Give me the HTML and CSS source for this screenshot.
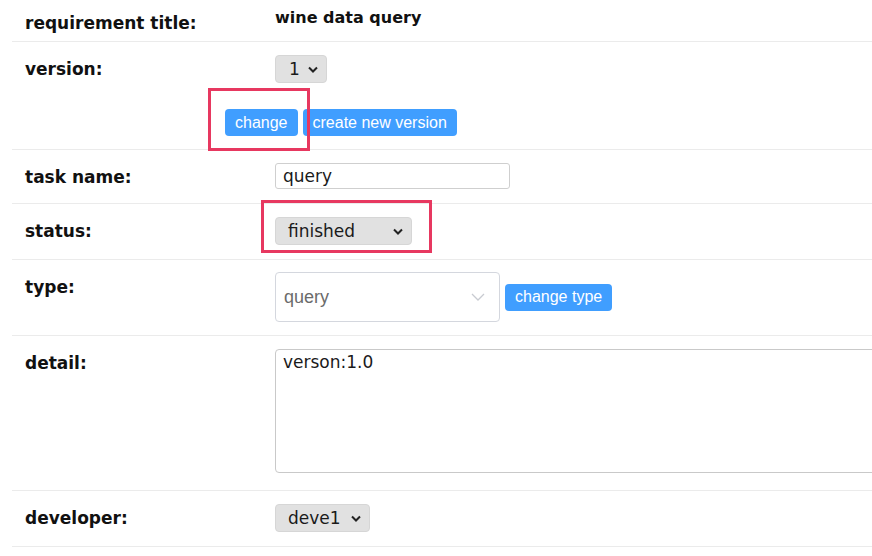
FILE: index.html
```html
<!DOCTYPE html>
<html>
<head>
<meta charset="utf-8">
<link rel="stylesheet" href="styles.css">
</head>
<body>
<div class="sheet">
  <div class="row row-title">
    <div class="label">requirement title:</div>
    <div class="value title-value">wine data query</div>
  </div>
  <div class="row row-version">
    <div class="label">version:</div>
    <div class="value">
      <div class="select sel-version"><span>1</span><svg class="chev" viewBox="0 0 10 6"><path d="M1 1l4 4 4-4"/></svg></div>
    </div>
    <div class="actions">
      <button class="btn">change</button>
      <button class="btn">create new version</button>
      <div class="mark mark-change"></div>
    </div>
  </div>
  <div class="row">
    <div class="label">task name:</div>
    <div class="value"><input class="text-input" value="query"></div>
  </div>
  <div class="row">
    <div class="label">status:</div>
    <div class="value">
      <div class="select sel-status"><span>finished</span><svg class="chev" viewBox="0 0 10 6"><path d="M1 1l4 4 4-4"/></svg></div>
      <div class="mark mark-status"></div>
    </div>
  </div>
  <div class="row row-type">
    <div class="label">type:</div>
    <div class="value type-value">
      <div class="el-select"><span>query</span><svg class="el-chev" viewBox="0 0 14 8"><path d="M1 1l6 6 6-6"/></svg></div>
      <button class="btn">change type</button>
    </div>
  </div>
  <div class="row row-detail">
    <div class="label">detail:</div>
    <div class="value"><textarea class="detail-area">verson:1.0</textarea></div>
  </div>
  <div class="row">
    <div class="label">developer:</div>
    <div class="value">
      <div class="select sel-dev"><span>deve1</span><svg class="chev" viewBox="0 0 10 6"><path d="M1 1l4 4 4-4"/></svg></div>
    </div>
  </div>
</div>
</body>
</html>
```
FILE: styles.css
```css
html, body {
  margin: 0;
  padding: 0;
  background: #fff;
}
body {
  font-family: "DejaVu Sans", sans-serif;
  color: #111;
  overflow: hidden;
}
.sheet {
  margin-left: 12px;
  width: 1000px;
}
.row {
  display: flex;
  flex-wrap: wrap;
  border-bottom: 1px solid #ebebeb;
  padding: 13px 0 14px;
  position: relative;
}
.label {
  width: 250px;
  padding-left: 13px;
  padding-top: 4px;
  font-weight: bold;
  font-size: 17px;
  line-height: 20px;
}
.value {
  position: relative;
  display: flex;
  align-items: flex-start;
}
.row-title {
  height: 42px;
  box-sizing: border-box;
  padding: 0;
}
.row-title .label {
  padding-top: 13px;
}
.title-value {
  font-weight: bold;
  font-size: 16px;
  padding-top: 8px;
  line-height: 20px;
}
.row-version {
  padding-bottom: 13px;
}
.select {
  display: flex;
  align-items: center;
  height: 28px;
  box-sizing: border-box;
  background: #e1e1e1;
  border: 1px solid #d6d6d6;
  border-radius: 4px;
  padding: 0 8px 0 12px;
  font-size: 17px;
  color: #1a1a1a;
}
.select span {
  flex: 1;
}
.chev {
  width: 10px;
  height: 7px;
  fill: none;
  stroke: #222;
  stroke-width: 2;
}
.sel-version { width: 52px; padding-left: 13px; }
.sel-status { width: 137px; }
.sel-dev { width: 95px; }
.actions {
  flex-basis: 100%;
  display: flex;
  gap: 5px;
  padding-left: 213px;
  margin-top: 26px;
  position: relative;
}
.btn {
  font-family: "Liberation Sans", Arial, sans-serif;
  font-size: 16px;
  color: #fff;
  background: #409eff;
  border: none;
  border-radius: 4px;
  height: 27px;
  padding: 0 10px;
  margin: 0;
}
.text-input {
  width: 235px;
  height: 26px;
  box-sizing: border-box;
  border: 1px solid #cfcfcf;
  border-radius: 3px;
  padding: 0 7px;
  font-family: "DejaVu Sans", sans-serif;
  font-size: 17px;
  color: #1a1a1a;
  margin: 0;
}
.row-type {
  padding: 12px 0 13px;
}
.type-value {
  align-items: center;
  gap: 5px;
}
.el-select {
  width: 225px;
  height: 50px;
  box-sizing: border-box;
  border: 1px solid #d4d7de;
  border-radius: 4px;
  display: flex;
  align-items: center;
  padding: 0 14px 0 8px;
  font-family: "Liberation Sans", Arial, sans-serif;
  font-size: 18px;
  color: #6b6b6b;
}
.el-select span { flex: 1; }
.el-chev {
  width: 14px;
  height: 8px;
  fill: none;
  stroke: #c8cbd1;
  stroke-width: 1.3;
}
.row-type .label { padding-top: 5px; }
.row-detail {
  padding-bottom: 17px;
}
.detail-area {
  display: block;
  width: 620px;
  height: 124px;
  box-sizing: border-box;
  border: 1px solid #c9c9c9;
  border-radius: 4px;
  padding: 2px 7px;
  font-family: "DejaVu Sans", sans-serif;
  font-size: 17px;
  color: #1a1a1a;
  resize: none;
  margin: 0;
}
.mark {
  position: absolute;
  border: 3px solid #e73860;
  box-sizing: border-box;
}
.mark-change {
  left: 196px;
  top: -21px;
  width: 102px;
  height: 63px;
}
.mark-status {
  left: -14px;
  top: -17px;
  width: 171px;
  height: 53px;
}
```
